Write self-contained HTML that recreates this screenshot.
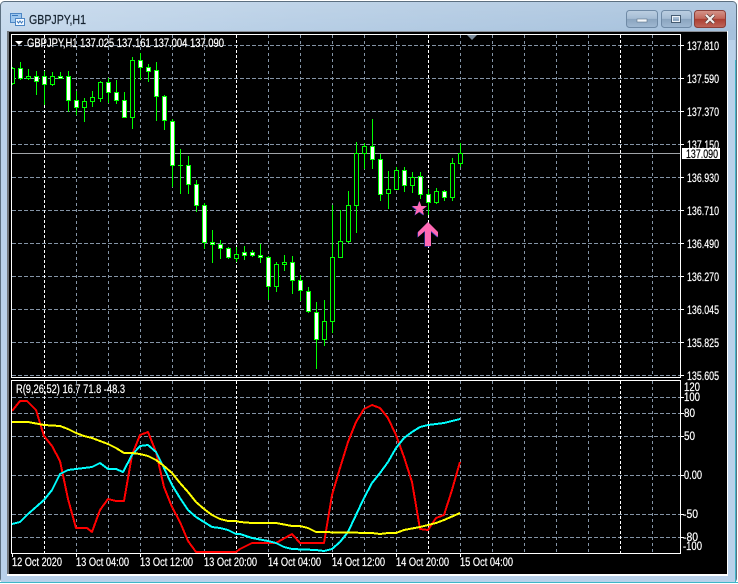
<!DOCTYPE html>
<html>
<head>
<meta charset="utf-8">
<title>GBPJPY,H1</title>
<style>
html,body{margin:0;padding:0;background:#fff}
body{width:738px;height:584px;overflow:hidden}
svg{display:block}
text{font-family:"Liberation Sans",sans-serif;font-size:11.5px;fill:#fff;stroke:#fff;stroke-width:.2px}
</style>
</head>
<body>
<svg width="738" height="584" viewBox="0 0 738 584" xmlns="http://www.w3.org/2000/svg">
<defs>
<linearGradient id="tb" x1="0" x2="1" y1="0" y2="0"><stop offset="0" stop-color="#c6d9ec"/><stop offset=".4" stop-color="#b7cee5"/><stop offset="1" stop-color="#a6c1dc"/></linearGradient>
<linearGradient id="tv" x1="0" x2="0" y1="0" y2="1"><stop offset="0" stop-color="#fff" stop-opacity=".12"/><stop offset="1" stop-color="#fff" stop-opacity="0"/></linearGradient>
<linearGradient id="bn" x1="0" x2="0" y1="0" y2="1"><stop offset="0" stop-color="#bccfe2"/><stop offset=".48" stop-color="#a5bcd4"/><stop offset=".5" stop-color="#8aa4bf"/><stop offset="1" stop-color="#a0b9d2"/></linearGradient>
<linearGradient id="cl" x1="0" x2="0" y1="0" y2="1"><stop offset="0" stop-color="#d4968b"/><stop offset=".48" stop-color="#c26659"/><stop offset=".5" stop-color="#ab3d30"/><stop offset="1" stop-color="#bf675b"/></linearGradient>
<clipPath id="main"><rect x="12" y="35" width="668" height="342"/></clipPath>
<clipPath id="ind"><rect x="12" y="381" width="668" height="172"/></clipPath>
</defs>

<!-- window chrome -->
<rect x="0" y="0" width="738" height="584" fill="#fff"/>
<rect x="0.5" y="1.5" width="736" height="581" rx="4" fill="url(#tb)" stroke="#5c6f80"/>
<rect x="1" y="2" width="735" height="29" fill="url(#tv)"/>
<rect x="1" y="70" width="6" height="510" fill="#b9d1ea"/>
<rect x="728" y="40" width="7" height="540" fill="#b9d1ea"/>
<rect x="1" y="576" width="735" height="6" fill="#b9d1ea"/>
<rect x="0" y="582" width="738" height="1" fill="#3fb6c8"/>
<rect x="735" y="60" width="1" height="522" fill="#3fb6c8"/>
<rect x="7" y="31" width="721" height="545" fill="#fff"/>
<rect x="7" y="31" width="720" height="3" fill="#8a8f96"/>
<rect x="7" y="31" width="2" height="543" fill="#70757a"/>
<rect x="9" y="32" width="718" height="542" fill="#000"/>

<!-- title icon -->
<rect x="10.5" y="13.5" width="11" height="9" fill="#9cc6ee" stroke="#4d86c4"/>
<rect x="15.5" y="18.5" width="9" height="7" fill="#f2f8ff" stroke="#4d86c4"/>
<path d="M12 15.5h6M17 21l1.500 2 1.500-2 1.500 2 1.500-2" fill="none" stroke="#3a79bd"/>
<text x="29" y="24" textLength="57" lengthAdjust="spacingAndGlyphs" style="font-size:12.500px;fill:#15222f;stroke:#15222f">GBPJPY,H1</text>

<!-- window buttons -->
<rect x="626.500" y="10.500" width="31" height="17" rx="3" fill="url(#bn)" stroke="#6f8aa6"/>
<rect x="637" y="19" width="10" height="3" fill="#f5f8fb" stroke="#5d7288" stroke-width=".6"/>
<rect x="661.500" y="10.500" width="30" height="17" rx="3" fill="url(#bn)" stroke="#6f8aa6"/>
<rect x="671.500" y="15.500" width="9" height="7" fill="none" stroke="#465c72" stroke-width="1"/>
<rect x="672.500" y="16.500" width="7" height="5" fill="none" stroke="#eef3f8" stroke-width="1"/>
<rect x="694.500" y="10.500" width="31" height="17" rx="3" fill="url(#cl)" stroke="#8c3f38"/>
<path d="M706 15l8 8M714 15l-8 8" stroke="#5a3c3a" stroke-width="3.600"/>
<path d="M706 15l8 8M714 15l-8 8" stroke="#f4f0ee" stroke-width="2.200"/>

<!-- grid -->
<g shape-rendering="crispEdges" stroke-width="1" fill="none">
<g clip-path="url(#main)" stroke="#8494a6" stroke-dasharray="4 2">
<path d="M12 45.500H680M12 78.500H680M12 111.500H680M12 144.500H680M12 177.500H680M12 210.500H680M12 243.500H680M12 276.500H680M12 309.500H680M12 342.500H680M12 375.500H680"/>
</g>
<g clip-path="url(#main)" stroke="#8494a6" stroke-dasharray="3 3">
<path d="M76.500 35V377M108.500 35V377M140.500 35V377M172.500 35V377M204.500 35V377M268.500 35V377M300.500 35V377M332.500 35V377M364.500 35V377M396.500 35V377M460.500 35V377M492.500 35V377M524.500 35V377M556.500 35V377M588.500 35V377M652.500 35V377"/>
</g>
<g clip-path="url(#main)" stroke="#fff" stroke-dasharray="3 2">
<path d="M44.500 35V377M236.500 35V377M428.500 35V377M620.500 35V377"/>
</g>
<g clip-path="url(#ind)" stroke="#8494a6" stroke-dasharray="4 2">
<path d="M12 397.500H680M12 413.500H680M12 436.500H680M12 475.500H680M12 514.500H680M12 537.500H680"/>
</g>
<g clip-path="url(#ind)" stroke="#8494a6" stroke-dasharray="3 3">
<path d="M76.500 381V553M108.500 381V553M140.500 381V553M172.500 381V553M204.500 381V553M268.500 381V553M300.500 381V553M332.500 381V553M364.500 381V553M396.500 381V553M460.500 381V553M492.500 381V553M524.500 381V553M556.500 381V553M588.500 381V553M652.500 381V553"/>
</g>
<g clip-path="url(#ind)" stroke="#fff" stroke-dasharray="3 2">
<path d="M44.500 381V553M236.500 381V553M428.500 381V553M620.500 381V553"/>
</g>

<!-- price line -->
<path d="M12 153.500H681" stroke="#a0a4a8"/>

<!-- candles -->
<g clip-path="url(#main)" stroke="#00ff00">
<path d="M12.500 67V85M20.500 62V80M28.500 69V80M36.500 71V95M44.500 71V105M52.500 72V86M60.500 72V79M68.500 71V112M76.500 91V115M84.500 98V122M92.500 91V107M100.500 81V102M108.500 78V103M116.500 80V104M124.500 92V118M132.500 57V129M140.500 53V80M148.500 64V82M156.500 62V121M164.500 95V130M172.500 119V187M180.500 149V194M188.500 156V194M196.500 180V212M204.500 203V249M212.500 230V263M220.500 240V259M228.500 247V259M236.500 247V262M244.500 246V260M252.500 250V257M260.500 244V263M268.500 256V300M276.500 262V292M284.500 255V271M292.500 256V294M300.500 275V301M308.500 287V313M316.500 302V369M324.500 300V346M332.500 205V333M340.500 210V257M348.500 191V243M356.500 142V233M364.500 143V169M372.500 119V169M380.500 154V201M388.500 171V209M396.500 167V190M404.500 167V192M412.500 172V193M420.500 172V199M428.500 189V215M436.500 188V204M444.500 190V201M452.500 158V201M460.500 143V167M178 165.500H183"/>
<path fill="#000" d="M10.500 68.500h4v15h-4zM26.500 76.500h4v2h-4zM50.500 76.500h4v8h-4zM82.500 101.500h4v6h-4zM90.500 97.500h4v4h-4zM98.500 82.500h4v16h-4zM130.500 60.500h4v57h-4zM234.500 254.500h4v4h-4zM274.500 264.500h4v22h-4zM282.500 262.500h4v2h-4zM322.500 321.500h4v18h-4zM330.500 257.500h4v64h-4zM338.500 241.500h4v16h-4zM346.500 205.500h4v36h-4zM354.500 153.500h4v52h-4zM362.500 146.500h4v7h-4zM386.500 189.500h4v4h-4zM394.500 170.500h4v19h-4zM410.500 177.500h4v8h-4zM434.500 191.500h4v11h-4zM450.500 163.500h4v34h-4zM458.500 153.500h4v10h-4z"/>
<path fill="#fff" d="M18.500 68.500h4v10h-4zM34.500 76.500h4v5h-4zM42.500 76.500h4v8h-4zM58.500 76.500h4v2h-4zM66.500 76.500h4v24h-4zM74.500 100.500h4v7h-4zM106.500 82.500h4v10h-4zM114.500 92.500h4v8h-4zM122.500 100.500h4v17h-4zM138.500 60.500h4v7h-4zM146.500 67.500h4v4h-4zM154.500 70.500h4v26h-4zM162.500 96.500h4v24h-4zM170.500 121.500h4v44h-4zM186.500 165.500h4v19h-4zM194.500 184.500h4v21h-4zM202.500 205.500h4v37h-4zM210.500 242.500h4v2h-4zM218.500 244.500h4v4h-4zM226.500 248.500h4v9h-4zM242.500 252.500h4v3h-4zM250.500 252.500h4v3h-4zM258.500 255.500h4v2h-4zM266.500 257.500h4v29h-4zM290.500 262.500h4v18h-4zM298.500 280.500h4v10h-4zM306.500 291.500h4v20h-4zM314.500 312.500h4v27h-4zM370.500 146.500h4v13h-4zM378.500 159.500h4v35h-4zM402.500 170.500h4v15h-4zM418.500 176.500h4v18h-4zM426.500 194.500h4v8h-4zM442.500 191.500h4v6h-4z"/>
</g>

<!-- frames and ticks -->
<rect x="11.500" y="34.500" width="669" height="343" stroke="#fff"/>
<rect x="11.500" y="380.500" width="669" height="173" stroke="#fff"/>
<path stroke="#fff" d="M681 45.500h3M681 78.500h3M681 111.500h3M681 144.500h3M681 177.500h3M681 210.500h3M681 243.500h3M681 276.500h3M681 309.500h3M681 342.500h3M681 375.500h3M681 397.500h3M681 413.500h3M681 436.500h3M681 475.500h3M681 514.500h3M681 537.500h3"/>
<path stroke="#fff" d="M12.500 554v3M76.500 554v3M140.500 554v3M204.500 554v3M268.500 554v3M332.500 554v3M396.500 554v3M460.500 554v3"/>
</g>

<!-- shift triangle and menu triangle -->
<path d="M467 35h10l-5 5z" fill="#7a8a9a"/>
<path d="M15 41h8l-4 4z" fill="#fff"/>

<!-- indicator lines -->
<g clip-path="url(#ind)" fill="none" stroke-width="2" stroke-linejoin="round" shape-rendering="crispEdges">
<polyline stroke="#ff0000" points="12,411 20,401 27,401 36,410 44,436 52,446 60,461 68,499 76,528 87,528 92,532 100,510 108,499 116,501 124,501 132,455 140,435 148,432 156,452 164,487 172,507 180,522 188,541 196,552 236,552 240,549 252,543 276,543 292,534 300,543 324,543 332,495 340,468 348,442 356,422 364,409 372,405 380,408 388,418 396,435 404,457 412,482 420,529 428,530 436,518 444,515 452,490 460,462"/>
<polyline stroke="#00ffff" points="12,524 20,522 28,514 36,507 44,500 52,490 60,474 68,470 76,469 84,468 92,467 100,463 108,469 116,469 123,472 132,455 140,446 148,445 156,452 164,468 172,485 180,498 188,510 196,517 204,522 212,527 220,528 228,530 236,534 240,534 252,538 268,541 276,543 284,547 292,549 316,550 324,551 332,549 340,542 348,532 356,515 364,498 372,483 380,473 388,462 396,448 404,438 412,432 420,427 428,425 444,423 460,419"/>
<polyline stroke="#ffff00" points="12,422 28,422 44,425 60,426 68,429 76,433 84,436 92,438 100,441 108,444 116,448 124,453 132,453 140,454 148,456 156,460 164,466 172,473 180,483 188,492 196,502 204,509 212,515 220,519 228,521 236,521 240,522 252,523 276,523 292,526 300,526 308,528 316,532 372,533 380,534 388,533 396,533 404,530 420,527 436,523 444,520 460,513"/>
</g>

<!-- star and arrow -->
<g transform="translate(-.6,.6)" fill="#3a3ac0">
<polygon points="419.500,201 421.300,206 427,206 422.500,209.500 424,215 419.500,211.700 415,215 416.500,209.500 412,206 417.700,206"/>
<polygon points="428,222 438,232 438,237 431,231 431,246 425,246 425,231 418,237 418,232"/>
</g>
<g fill="#ff69b4">
<polygon points="419.500,201 421.300,206 427,206 422.500,209.500 424,215 419.500,211.700 415,215 416.500,209.500 412,206 417.700,206"/>
<polygon points="428,222 438,232 438,237 431,231 431,246 425,246 425,231 418,237 418,232"/>
</g>

<!-- header labels -->
<text x="27" y="47" textLength="197" lengthAdjust="spacingAndGlyphs">GBPJPY,H1  137.025 137.161 137.004 137.090</text>
<text x="16" y="393" textLength="109" lengthAdjust="spacingAndGlyphs">R(9,26,52) 16.7 71.8 -48.3</text>

<!-- price labels -->
<g>
<text x="687" y="50" textLength="32" lengthAdjust="spacingAndGlyphs">137.810</text>
<text x="687" y="83" textLength="32" lengthAdjust="spacingAndGlyphs">137.590</text>
<text x="687" y="116" textLength="32" lengthAdjust="spacingAndGlyphs">137.370</text>
<text x="687" y="149" textLength="32" lengthAdjust="spacingAndGlyphs">137.150</text>
<text x="687" y="182" textLength="32" lengthAdjust="spacingAndGlyphs">136.930</text>
<text x="687" y="215" textLength="32" lengthAdjust="spacingAndGlyphs">136.710</text>
<text x="687" y="248" textLength="32" lengthAdjust="spacingAndGlyphs">136.490</text>
<text x="687" y="281" textLength="32" lengthAdjust="spacingAndGlyphs">136.270</text>
<text x="687" y="314" textLength="32" lengthAdjust="spacingAndGlyphs">136.045</text>
<text x="687" y="347" textLength="32" lengthAdjust="spacingAndGlyphs">135.825</text>
<text x="687" y="380" textLength="32" lengthAdjust="spacingAndGlyphs">135.605</text>
</g>
<rect x="682" y="148" width="38" height="11" fill="#fff"/>
<text x="686" y="158" textLength="32" lengthAdjust="spacingAndGlyphs" style="fill:#000;stroke:#000">137.090</text>

<!-- indicator labels -->
<g>
<text x="684" y="391" textLength="16" lengthAdjust="spacingAndGlyphs">120</text>
<text x="684" y="401" textLength="16" lengthAdjust="spacingAndGlyphs">100</text>
<text x="684" y="417" textLength="11" lengthAdjust="spacingAndGlyphs">80</text>
<text x="684" y="440" textLength="11" lengthAdjust="spacingAndGlyphs">50</text>
<text x="684" y="479" textLength="18" lengthAdjust="spacingAndGlyphs">0.00</text>
<text x="683" y="518" textLength="15" lengthAdjust="spacingAndGlyphs">-50</text>
<text x="683" y="541" textLength="15" lengthAdjust="spacingAndGlyphs">-80</text>
<text x="683" y="550" textLength="19" lengthAdjust="spacingAndGlyphs">-100</text>
</g>

<!-- time labels -->
<g>
<text x="12" y="566" textLength="50" lengthAdjust="spacingAndGlyphs">12 Oct 2020</text>
<text x="76" y="566" textLength="53" lengthAdjust="spacingAndGlyphs">13 Oct 04:00</text>
<text x="140" y="566" textLength="53" lengthAdjust="spacingAndGlyphs">13 Oct 12:00</text>
<text x="204" y="566" textLength="53" lengthAdjust="spacingAndGlyphs">13 Oct 20:00</text>
<text x="268" y="566" textLength="53" lengthAdjust="spacingAndGlyphs">14 Oct 04:00</text>
<text x="332" y="566" textLength="53" lengthAdjust="spacingAndGlyphs">14 Oct 12:00</text>
<text x="396" y="566" textLength="53" lengthAdjust="spacingAndGlyphs">14 Oct 20:00</text>
<text x="460" y="566" textLength="53" lengthAdjust="spacingAndGlyphs">15 Oct 04:00</text>
</g>
</svg>
</body>
</html>
